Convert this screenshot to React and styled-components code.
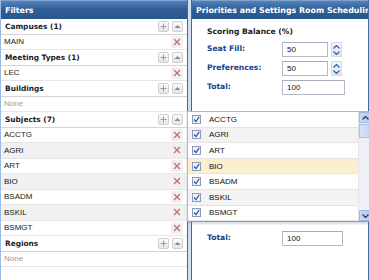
import React from "react";
import styled, { createGlobalStyle } from "styled-components";

const GlobalStyle = createGlobalStyle`
  body {
    margin: 0;
    background: #d3e0f1;
    font-family: "DejaVu Sans", Verdana, sans-serif;
  }
`;

const Page = styled.div`
  position: relative;
  width: 369px;
  height: 280px;
  display: flex;
  gap: 3px;
  overflow: hidden;
  background: #d3e0f1;
`;

const Panel = styled.div`
  display: flex;
  flex-direction: column;
  width: ${(p) => p.$width || "auto"};
  flex: ${(p) => (p.$width ? "none" : "1")};
  min-width: 0;
  background: #fff;
  border-left: 1px solid ${(p) => (p.$right ? "#3f6a9f" : "#99bbe8")};
  border-right: 1px solid #3f6a9f;
`;

const Header = styled.div`
  height: 19px;
  flex: none;
  display: flex;
  align-items: center;
  padding-left: 4px;
  background: linear-gradient(#5583bb, #2f5f97 45%, #29578d);
  border-top: 1px solid #7fa2cf;
  box-sizing: border-box;
  color: #fff;
  font-weight: bold;
  font-size: 7.9px;
  white-space: nowrap;
  overflow: hidden;
`;

const Row = styled.div`
  height: 15.5px;
  box-sizing: border-box;
  display: flex;
  align-items: center;
  padding: 0 4px 0 ${(p) => (p.$group ? "4px" : "3px")};
  background: ${(p) => (p.$alt ? "#f1f1f1" : "#fff")};
  border-bottom: 1px solid ${(p) => (p.$group ? "#d4d4d4" : "#e6e6e6")};
  font-family: ${(p) =>
    p.$group ? '"DejaVu Sans", Verdana, sans-serif' : '"Liberation Sans", Arial, sans-serif'};
  font-weight: ${(p) => (p.$group ? "bold" : "normal")};
  font-size: ${(p) => (p.$group ? "7.4px" : "8px")};
  color: ${(p) => (p.$muted ? "#9a9a9a" : "#1a1a1a")};
`;

const Label = styled.span`
  flex: 1;
  white-space: nowrap;
`;

const Tool = styled.span`
  width: 9px;
  height: 9px;
  margin-left: 3px;
  display: flex;
  align-items: center;
  justify-content: center;
  border: 1px solid #cfcfcf;
  border-radius: 2px;
  background: linear-gradient(#fbfbfb, #e6e6e6);
`;

const RemoveBox = styled.span`
  width: 12px;
  height: 12px;
  display: flex;
  align-items: center;
  justify-content: center;
  background: #f1f1f1;
`;

const Filler = styled.div`
  flex: 1;
  background: #fff;
`;

const Body = styled.div`
  flex: 1;
  padding: 7px 0 0 15px;
  font-size: 7.6px;
`;

const Title = styled.div`
  font-weight: bold;
  color: #222;
  height: 12px;
  line-height: 12px;
  margin-bottom: 4px;
`;

const Form = styled.div`
  display: grid;
  grid-template-columns: 75px auto;
  row-gap: 4px;
  align-items: center;
  margin-top: ${(p) => p.$top || "0"};
`;

const FieldLabel = styled.div`
  font-weight: bold;
  color: #15428b;
  align-self: start;
  padding-top: 2px;
`;

const FieldWrap = styled.div`
  display: flex;
  align-items: center;
  gap: 3px;
`;

const Input = styled.div`
  width: ${(p) => p.$w}px;
  height: 15px;
  box-sizing: border-box;
  border: 1px solid #b5b8c8;
  border-top-color: #a7abbd;
  background: #fff;
  display: flex;
  align-items: center;
  padding-left: 4px;
  font-family: "Liberation Sans", Arial, sans-serif;
  font-size: 8px;
  color: #111;
`;

const Spinner = styled.div`
  width: 11px;
  height: 15px;
  box-sizing: border-box;
  border: 1px solid #d3dbe6;
  background: linear-gradient(#f4f7fb, #dfe7f2);
  display: flex;
  align-items: center;
  justify-content: center;
`;

const SpinStack = styled.div`
  display: flex;
  flex-direction: column;
  gap: 2px;
`;

const Dropdown = styled.div`
  position: absolute;
  left: 187px;
  top: 111px;
  width: 190px;
  height: 111px;
  box-sizing: border-box;
  border: 1px solid #99bbe8;
  border-bottom-color: #7aa0d6;
  background: #fff;
  display: flex;
  box-shadow: 0 2px 2px rgba(80, 110, 160, 0.25);
`;

const List = styled.div`
  width: 171px;
  flex: none;
`;

const Option = styled.div`
  height: 15.6px;
  box-sizing: border-box;
  display: flex;
  align-items: center;
  gap: 8px;
  padding-left: 4px;
  border-bottom: 1px solid #e4e4e4;
  border-right: 1px solid #e4e4e4;
  background: ${(p) => (p.$hl ? "#fbefcf" : p.$alt ? "#f3f3f3" : "#fff")};
  font-family: "Liberation Sans", Arial, sans-serif;
  font-size: 8px;
  color: #111;
`;

const Scrollbar = styled.div`
  width: 12px;
  display: flex;
  flex-direction: column;
  background: #eef2f8;
`;

const ScrollButton = styled.div`
  height: 11px;
  display: flex;
  align-items: center;
  justify-content: center;
  background: linear-gradient(90deg, #c9d9f0, #b6cbea);
  border: 1px solid #9fb8df;
  box-sizing: border-box;
`;

const Thumb = styled.div`
  height: 14px;
  margin-top: 1px;
  background: linear-gradient(90deg, #d9e5f6, #c3d5ef);
  border: 1px solid #a9c0e3;
  box-sizing: border-box;
`;

const Track = styled.div`
  flex: 1;
`;

const Plus = () => (
  <svg width="7" height="7" viewBox="0 0 7 7">
    <path d="M3.5 0.5v6M0.5 3.5h6" stroke="#9a9a9a" strokeWidth="1" />
  </svg>
);

const Collapse = () => (
  <svg width="7" height="5" viewBox="0 0 7 5">
    <path d="M0.5 4L3.5 1l3 3z" fill="#8a8a8a" />
  </svg>
);

const Cross = () => (
  <svg width="8" height="8" viewBox="0 0 8 8">
    <path d="M1 1l6 6M7 1l-6 6" stroke="#c86a6a" strokeWidth="1.3" />
  </svg>
);

const Chevron = ({ up, color = "#2f64a8" }) => (
  <svg width="7" height="4" viewBox="0 0 7 4">
    <path d={up ? "M0.5 3.5l3-3 3 3" : "M0.5 0.5l3 3 3-3"} stroke={color} strokeWidth="1.3" fill="none" />
  </svg>
);

const Check = () => (
  <svg width="9" height="9" viewBox="0 0 9 9">
    <rect x="0.5" y="0.5" width="8" height="8" fill="#eef1f6" stroke="#8e9bb1" />
    <path d="M2 4.5l2 2 3.2-4.6" stroke="#2c54b8" strokeWidth="1.2" fill="none" />
  </svg>
);

const Group = ({ children }) => (
  <Row $group>
    <Label>{children}</Label>
    <Tool>
      <Plus />
    </Tool>
    <Tool>
      <Collapse />
    </Tool>
  </Row>
);

const Item = ({ children, alt }) => (
  <Row $alt={alt}>
    <Label>{children}</Label>
    <RemoveBox>
      <Cross />
    </RemoveBox>
  </Row>
);

const Empty = () => <Row $muted>None</Row>;

const subjects = ["ACCTG", "AGRI", "ART", "BIO", "BSADM", "BSKIL", "BSMGT"];

const NumberField = ({ value }) => (
  <FieldWrap>
    <Input $w={46}>{value}</Input>
    <Spinner>
      <SpinStack>
        <Chevron up />
        <Chevron />
      </SpinStack>
    </Spinner>
  </FieldWrap>
);

export default function App() {
  return (
    <>
      <GlobalStyle />
      <Page>
        <Panel $width="186px">
          <Header>Filters</Header>
          <Group>Campuses (1)</Group>
          <Item>MAIN</Item>
          <Group>Meeting Types (1)</Group>
          <Item>LEC</Item>
          <Group>Buildings</Group>
          <Empty />
          <Group>Subjects (7)</Group>
          {subjects.map((s, i) => (
            <Item key={s} alt={i % 2 === 1}>
              {s}
            </Item>
          ))}
          <Group>Regions</Group>
          <Empty />
          <Filler />
        </Panel>
        <Panel $right>
          <Header>Priorities and Settings Room Scheduling Preferences</Header>
          <Body>
            <Title>Scoring Balance (%)</Title>
            <Form>
              <FieldLabel>Seat Fill:</FieldLabel>
              <NumberField value="50" />
              <FieldLabel>Preferences:</FieldLabel>
              <NumberField value="50" />
              <FieldLabel>Total:</FieldLabel>
              <Input $w={63}>100</Input>
            </Form>
            <Form $top="136px">
              <FieldLabel>Total:</FieldLabel>
              <Input $w={61}>100</Input>
            </Form>
          </Body>
        </Panel>
        <Dropdown>
          <List>
            {subjects.map((s, i) => (
              <Option key={s} $alt={i % 2 === 1} $hl={s === "BIO"}>
                <Check />
                {s}
              </Option>
            ))}
          </List>
          <Scrollbar>
            <ScrollButton>
              <Chevron up color="#1f3f70" />
            </ScrollButton>
            <Thumb />
            <Track />
            <ScrollButton>
              <Chevron color="#1f3f70" />
            </ScrollButton>
          </Scrollbar>
        </Dropdown>
      </Page>
    </>
  );
}
